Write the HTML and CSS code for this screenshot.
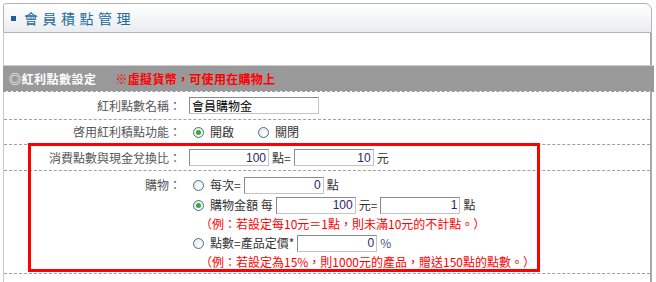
FILE: index.html
```html
<!DOCTYPE html>
<html lang="zh-Hant">
<head>
    <meta charset="UTF-8">
    <title>會員積點管理</title>
    <link rel="stylesheet" href="styles.css">
</head>
<body>
    <div class="panel">
        <div class="panel-head">
            <span class="bullet"></span>
            <h1>會員積點管理</h1>
        </div>

        <div class="panel-body">
            <div class="spacer"></div>

            <div class="section-bar">
                <span class="section-title">◎紅利點數設定</span>
                <span class="section-note">※虛擬貨幣，可使用在購物上</span>
            </div>

            <div class="row row-name">
                <div class="label">紅利點數名稱：</div>
                <div class="value">
                    <input type="text" class="text-input" value="會員購物金">
                </div>
            </div>

            <div class="row row-switch">
                <div class="label">啓用紅利積點功能：</div>
                <div class="value">
                    <span class="radio on"></span>開啟
                    <span class="radio radio-gap"></span>關閉
                </div>
            </div>

            <div class="row row-ratio">
                <div class="label">消費點數與現金兌換比：</div>
                <div class="value">
                    <input type="text" class="num" value="100">點=<input type="text" class="num" value="10">元
                </div>
            </div>

            <div class="row row-shop">
                <div class="label">購物：</div>
                <div class="value options">
                    <div class="option"><span class="radio"></span>每次=<input type="text" class="num" value="0">點</div>
                    <div class="option"><span class="radio on"></span>購物金額 每<input type="text" class="num" value="100">元=<input type="text" class="num" value="1">點</div>
                    <div class="hint">（例：若設定每10元＝1點，則未滿10元的不計點。）</div>
                    <div class="option"><span class="radio"></span>點數=產品定價*<input type="text" class="num" value="0"><span class="pct">%</span></div>
                    <div class="hint">（例：若設定為15%，則1000元的產品，贈送150點的點數。）</div>
                </div>
            </div>

            <!-- red frame drawn over the two point rules -->
            <div class="highlight"></div>
        </div>
    </div>
</body>
</html>
```

FILE: styles.css
```css
body {
    margin: 0;
    font-family: "Noto Sans CJK TC", "Noto Sans", sans-serif;
    font-size: 12px;
    color: #444;
    background-color: white;
}

.panel {
    width: 649px;
    margin: 3px 0 0 3px;
}

.panel-head {
    display: flex;
    align-items: center;
    height: 30px;
    box-sizing: border-box;
    border: 1px solid #b4b4b4;
    border-radius: 3px 7px 0 0;
    background: linear-gradient(#ffffff, #f6f7f8 45%, #e9ecee);
    padding-left: 7px;
}

.bullet {
    width: 5px;
    height: 5px;
    background-color: #1f5d99;
    margin-right: 8px;
}

.panel-head h1 {
    margin: 0;
    font-size: 14px;
    font-weight: normal;
    letter-spacing: 4.5px;
    color: #23699c;
    line-height: 20px;
}

.panel-body {
    position: relative;
    border-left: 1px solid #c8c8c8;
    border-right: 2px solid #a8a8a8;
    height: 249px;
}

.spacer {
    height: 32px;
}

.section-bar {
    display: flex;
    align-items: center;
    height: 25px;
    margin: 0 -4px 0 -1px;
    padding-left: 6px;
    border-top: 1px solid #cdcdcd;
    border-bottom: 1px dashed #999;
    background-color: #999;
    background-clip: padding-box;
    font-weight: bold;
}

.section-title {
    color: white;
    letter-spacing: 0.5px;
}

.section-note {
    color: #f00;
    margin-left: 19px;
    letter-spacing: 0.3px;
}

.row {
    display: flex;
    align-items: center;
    border-bottom: 1px dashed #a0a0a0;
}

.row-name { height: 27px; }
.row-switch { height: 24px; }
.row-ratio { height: 25px; }

.row-shop {
    align-items: flex-start;
    height: 102px;
}

.label {
    width: 177px;
    padding-right: 4px;
    text-align: right;
    color: #555;
    line-height: 20px;
    flex-shrink: 0;
}

.row-shop .label {
    padding-top: 4px;
}

.value {
    display: flex;
    align-items: center;
    padding-left: 4px;
    line-height: 20px;
    color: #333;
}

.options {
    display: block;
    padding-top: 4px;
}

.option {
    display: flex;
    align-items: center;
    height: 20px;
}

.hint {
    height: 18px;
    line-height: 18px;
    padding-left: 11px;
    color: #f00;
}

input {
    box-sizing: border-box;
    height: 17px;
    border: 1px solid #8a8a8a;
    border-right-color: #c4c4c4;
    border-bottom-color: #c4c4c4;
    margin: 0;
    padding: 0 2px;
    background-color: white;
    outline: none;
}

.text-input {
    width: 130px;
    font-family: "Noto Sans CJK TC", sans-serif;
    font-size: 12px;
    color: #000;
}

.num {
    width: 80px;
    margin: 0 3px;
    text-align: right;
    font-family: "Liberation Sans", Arial, sans-serif;
    font-size: 12px;
    color: #2b2670;
}

.value > .num:first-child {
    margin-left: 0;
}

.radio {
    position: relative;
    display: inline-block;
    box-sizing: border-box;
    width: 11px;
    height: 11px;
    margin: 0 6px 0 4px;
    border: 1px solid #4d6d8e;
    border-radius: 50%;
    background: radial-gradient(circle at 65% 65%, #ffffff, #dfe4e9);
    flex-shrink: 0;
}

.radio.on::after {
    content: "";
    position: absolute;
    left: 2px;
    top: 2px;
    width: 5px;
    height: 5px;
    border-radius: 50%;
    background-color: #2fae2f;
}

.radio-gap {
    margin-left: 24px;
}

.pct {
    color: #46508a;
}

.highlight {
    position: absolute;
    left: 24px;
    top: 110px;
    width: 512px;
    height: 129px;
    box-sizing: border-box;
    border: 3px solid #f00;
}
```
